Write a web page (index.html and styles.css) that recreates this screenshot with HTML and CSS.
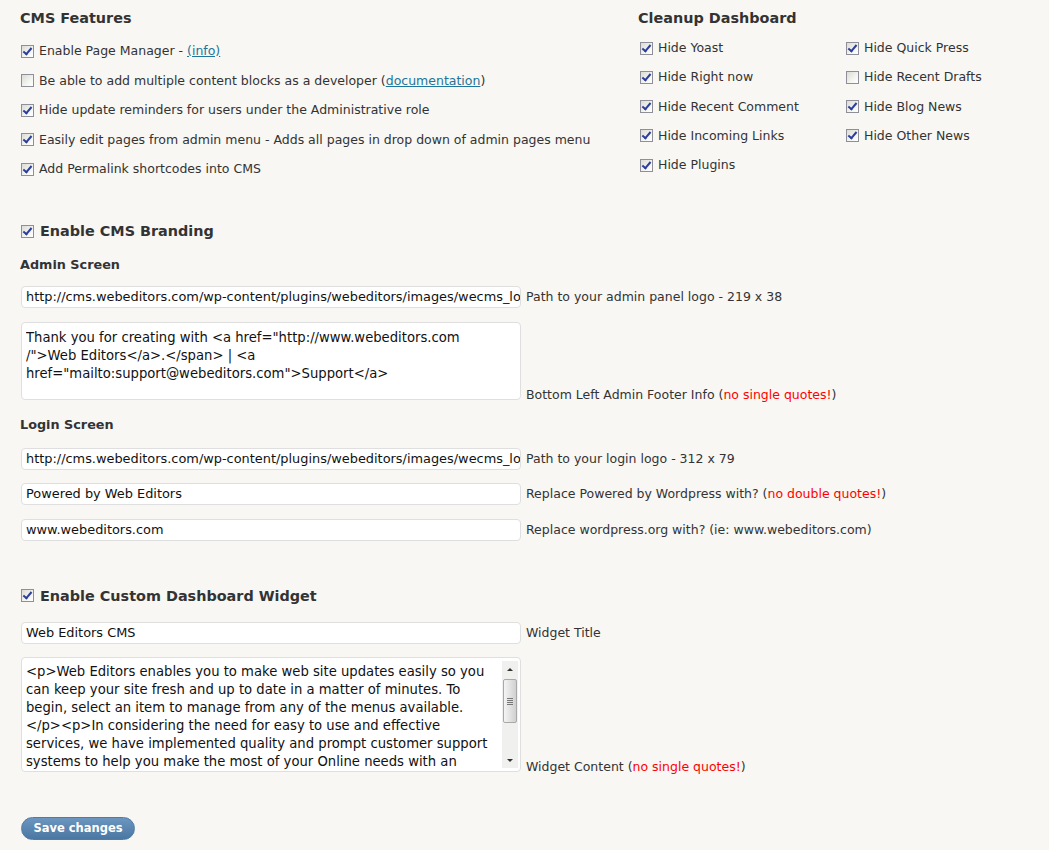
FILE: index.html
```html
<!DOCTYPE html>
<html>
<head>
<meta charset="utf-8">
<link rel="stylesheet" href="styles.css">
</head>
<body>
<div class="page">
  <div class="top">
    <div class="features">
      <h2 class="title">CMS Features</h2>
      <div class="rows">
        <div class="opt"><span class="cb on"></span><span>Enable Page Manager - <a class="lnk" href="#">(info)</a></span></div>
        <div class="opt"><span class="cb"></span><span>Be able to add multiple content blocks as a developer (<a class="lnk" href="#">documentation</a>)</span></div>
        <div class="opt"><span class="cb on"></span><span>Hide update reminders for users under the Administrative role</span></div>
        <div class="opt"><span class="cb on"></span><span>Easily edit pages from admin menu - Adds all pages in drop down of admin pages menu</span></div>
        <div class="opt"><span class="cb on"></span><span>Add Permalink shortcodes into CMS</span></div>
      </div>
    </div>
    <div class="cleanup">
      <h2 class="title">Cleanup Dashboard</h2>
      <div class="grid">
        <div class="opt"><span class="cb on"></span><span>Hide Yoast</span></div>
        <div class="opt"><span class="cb on"></span><span>Hide Quick Press</span></div>
        <div class="opt"><span class="cb on"></span><span>Hide Right now</span></div>
        <div class="opt"><span class="cb"></span><span>Hide Recent Drafts</span></div>
        <div class="opt"><span class="cb on"></span><span>Hide Recent Comment</span></div>
        <div class="opt"><span class="cb on"></span><span>Hide Blog News</span></div>
        <div class="opt"><span class="cb on"></span><span>Hide Incoming Links</span></div>
        <div class="opt"><span class="cb on"></span><span>Hide Other News</span></div>
        <div class="opt"><span class="cb on"></span><span>Hide Plugins</span></div>
      </div>
    </div>
  </div>

  <h2 class="big first"><span class="cb on"></span>Enable CMS Branding</h2>
  <h3 class="sub">Admin Screen</h3>
  <div class="field"><div class="input">http://cms.webeditors.com/wp-content/plugins/webeditors/images/wecms_lo</div><span class="label">Path to your admin panel logo - 219 x 38</span></div>
  <div class="field area-row"><div class="area a1"><div class="area-text">Thank you for creating with &lt;a href="http://www.webeditors.com<br>/"&gt;Web Editors&lt;/a&gt;.&lt;/span&gt; | &lt;a<br>href="mailto:support@webeditors.com"&gt;Support&lt;/a&gt;</div></div><span class="label low">Bottom Left Admin Footer Info (<span class="red">no single quotes!</span>)</span></div>

  <h3 class="sub login">Login Screen</h3>
  <div class="field"><div class="input">http://cms.webeditors.com/wp-content/plugins/webeditors/images/wecms_lo</div><span class="label">Path to your login logo - 312 x 79</span></div>
  <div class="field"><div class="input">Powered by Web Editors</div><span class="label">Replace Powered by Wordpress with? (<span class="red">no double quotes!</span>)</span></div>
  <div class="field"><div class="input">www.webeditors.com</div><span class="label">Replace wordpress.org with? (ie: www.webeditors.com)</span></div>

  <h2 class="big second"><span class="cb on"></span>Enable Custom Dashboard Widget</h2>
  <div class="field"><div class="input">Web Editors CMS</div><span class="label">Widget Title</span></div>
  <div class="field area-row"><div class="area a2"><div class="area-text">&lt;p&gt;Web Editors enables you to make web site updates easily so you<br>can keep your site fresh and up to date in a matter of minutes. To<br>begin, select an item to manage from any of the menus available.<br>&lt;/p&gt;&lt;p&gt;In considering the need for easy to use and effective<br>services, we have implemented quality and prompt customer support<br>systems to help you make the most of your Online needs with an</div><div class="sbar"><span class="arr up"></span><span class="thumb"><i></i><i></i><i></i><i></i></span><span class="track"></span><span class="arr down"></span></div></div><span class="label low">Widget Content (<span class="red">no single quotes!</span>)</span></div>

  <div class="btn-row"><button class="save">Save changes</button></div>
</div>
</body>
</html>
```

FILE: styles.css
```css
html, body {
  margin: 0;
  padding: 0;
  background: #f8f7f3;
}
body {
  font-family: "DejaVu Sans", Verdana, sans-serif;
  font-size: 12.5px;
  color: #333333;
  width: 1049px;
  height: 850px;
  overflow: hidden;
}
.page {
  padding: 0 0 0 21px;
}
.top {
  display: flex;
}
.features {
  width: 618px;
}
.title {
  margin: 8px 0 0 -1px;
  font-size: 14.4px;
  line-height: 20px;
  font-weight: bold;
  color: #333;
}
.rows {
  display: flex;
  flex-direction: column;
  gap: 11.6px;
  margin-top: 14px;
}
.opt {
  display: flex;
  align-items: center;
  height: 18px;
  line-height: 18px;
  white-space: nowrap;
}
.cb {
  box-sizing: border-box;
  width: 13px;
  height: 13px;
  border: 1px solid #8e8f99;
  background: linear-gradient(135deg, #dcdcd6 0%, #f4f4f0 60%, #ffffff 100%);
  margin-right: 5px;
  flex: none;
  position: relative;
}
.cb.on::after {
  content: "";
  position: absolute;
  left: 3px;
  top: 0px;
  width: 3px;
  height: 7px;
  border: solid #2b3d9e;
  border-width: 0 2px 2px 0;
  transform: rotate(40deg);
  transform-origin: center;
}
.lnk {
  color: #21759b;
  text-decoration: underline;
}
.cleanup {
  width: 390px;
}
.grid {
  display: grid;
  grid-template-columns: 206px 1fr;
  row-gap: 11.3px;
  margin-top: 11px;
  margin-left: 1px;
}
.big {
  display: flex;
  align-items: center;
  margin: 43px 0 0 0;
  font-size: 14.4px;
  line-height: 20px;
  font-weight: bold;
  color: #333;
}
.big .cb {
  margin-right: 6px;
}
.big.second {
  margin-top: 45px;
  margin-bottom: 16px;
}
.sub {
  margin: 15px 0 12px -1px;
  font-size: 12.8px;
  line-height: 18px;
  font-weight: bold;
  color: #333;
}
.sub.login {
  margin-top: 16px;
  margin-bottom: 14px;
}
.field {
  display: flex;
  align-items: center;
  margin-bottom: 13.5px;
}
.input, .area {
  box-sizing: border-box;
  width: 500px;
  background: #ffffff;
  border: 1px solid #dfdfdf;
  border-radius: 4px;
  color: #111;
  flex: none;
}
.input {
  height: 22px;
  line-height: 20px;
  padding: 0 4px;
  font-size: 12.9px;
  white-space: nowrap;
  overflow: hidden;
}
.label {
  margin-left: 5px;
  line-height: 18px;
  white-space: nowrap;
}
.red {
  color: #ff0000;
}
.area-row {
  align-items: flex-end;
}
.area-row .label.low {
  margin-bottom: -4px;
}
.area {
  display: flex;
  line-height: 18px;
  font-size: 13.2px;
  padding: 4px 0 0 4px;
  overflow: hidden;
  white-space: nowrap;
}
.a1 {
  height: 78px;
  padding-top: 6px;
}
.a2 {
  height: 115px;
  padding-top: 5px;
}
.area-text {
  flex: 1;
  overflow: hidden;
}
.sbar {
  width: 16px;
  margin: -2px 2px 3px 0;
  display: flex;
  flex-direction: column;
  background: #f0f0ee;
  flex: none;
}
.arr {
  height: 16px;
  display: flex;
  align-items: center;
  justify-content: center;
  flex: none;
}
.arr.up::before {
  content: "";
  border-left: 3px solid transparent;
  border-right: 3px solid transparent;
  border-bottom: 3px solid #333;
}
.arr.down::before {
  content: "";
  border-left: 3px solid transparent;
  border-right: 3px solid transparent;
  border-top: 3px solid #333;
}
.thumb {
  box-sizing: border-box;
  height: 44px;
  margin: 2px 1px 0 1px;
  border: 1px solid #a9a9a9;
  border-radius: 2px;
  background: linear-gradient(90deg, #f4f4f4 0%, #e4e4e4 45%, #d0d0d0 100%);
  display: flex;
  flex-direction: column;
  align-items: center;
  justify-content: center;
  gap: 1px;
  flex: none;
}
.thumb i {
  display: block;
  width: 6px;
  height: 1px;
  background: #777;
}
.track {
  flex: 1;
}
.btn-row {
  margin-top: 45px;
}
.save {
  box-sizing: border-box;
  height: 23px;
  width: 114px;
  padding: 0;
  border: 1px solid #4f7ca6;
  border-radius: 12px;
  background: linear-gradient(180deg, #6c96bf 0%, #5a86b1 50%, #4b77a3 100%);
  color: #ffffff;
  font-family: "DejaVu Sans", Verdana, sans-serif;
  font-size: 11.5px;
  font-weight: bold;
  line-height: 21px;
  margin-left: 0;
}
```
